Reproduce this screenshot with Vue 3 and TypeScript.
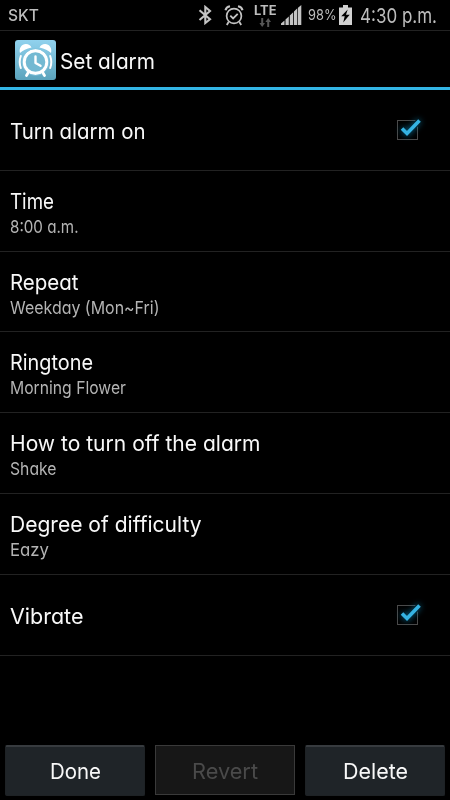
<script setup lang="ts">
import { ref } from 'vue'

interface Setting {
  title: string
  width: number
  summary?: string
  summaryWidth?: number
  toggle?: boolean
}

const settings = ref<Setting[]>([
  { title: 'Turn alarm on', width: 135.5, toggle: true },
  { title: 'Time', width: 44, summary: '8:00 a.m.', summaryWidth: 68.5 },
  { title: 'Repeat', width: 68.5, summary: 'Weekday (Mon~Fri)', summaryWidth: 149.5 },
  { title: 'Ringtone', width: 83, summary: 'Morning Flower', summaryWidth: 116 },
  { title: 'How to turn off the alarm', width: 250.5, summary: 'Shake', summaryWidth: 46.5 },
  { title: 'Degree of difficulty', width: 191.5, summary: 'Eazy', summaryWidth: 39 },
  { title: 'Vibrate', width: 73.5, toggle: true },
])

const actions = [
  { label: 'Done', width: 51, disabled: false },
  { label: 'Revert', width: 66, disabled: true },
  { label: 'Delete', width: 65, disabled: false },
]

// Condenses or widens a label to the given width in pixels.
const vFit = {
  mounted(el: HTMLElement, binding: { value?: number }) {
    const natural = el.getBoundingClientRect().width
    if (!binding.value || !natural) return
    el.style.transform = `scaleX(${binding.value / natural})`
    el.style.marginRight = `${binding.value - natural}px`
  },
}
</script>

<template>
  <main class="screen">
    <header class="status">
      <span v-fit="31" class="label carrier">SKT</span>
      <div class="indicators">
        <svg class="bluetooth" width="15" height="20" viewBox="0 0 15 20" fill="none" stroke="#c4c4c4" stroke-width="2.1">
          <path d="M1.500 5.200 12 14.200 7.300 18V2L12 6 1.500 15" />
        </svg>
        <svg class="clock" width="20" height="21" viewBox="0 0 20 21" fill="none" stroke="#c4c4c4">
          <circle cx="10" cy="11" r="7.4" stroke-width="1.7" />
          <path d="M1.500 5.200Q2.200 2 6 1.300M18.500 5.200Q17.800 2 14 1.300" stroke-width="2.1" />
          <path d="m6.300 10.700 2.800 2.800 4.600-4.600M4.600 17 2.800 20M15.400 17l1.800 3" stroke-width="1.8" />
        </svg>
        <div class="network">
          <span v-fit="22.5" class="label lte">LTE</span>
          <svg width="12" height="9" viewBox="0 0 12 9" fill="#565656">
            <path d="M2.200 0h2v5H6L3.200 9 .4 5h1.800zM8.200 9h2V4H12L9.200 0 6.400 4h1.800z" />
          </svg>
        </div>
        <svg class="signal" width="21" height="20" viewBox="0 0 21 20" fill="#c4c4c4">
          <path d="M0 20v-1.500L3.500 15.500V20zM4.500 20v-5.500l3.300-3V20zM8.800 20V10.500l3.400-3.200V20zM13 20V6.500l3.300-3.200V20zM17 20V2.800L20.300 0v20z" />
        </svg>
        <span v-fit="28.5" class="label percent">98%</span>
        <svg class="battery" width="13" height="20" viewBox="0 0 13 20">
          <path d="M4 0h5v2.500h4V20H0V2.500h4z" fill="#d2d2d2" />
          <path d="M8.700 4.500 2.200 11.300h3.500L4.200 17.500l6.500-7.800H7z" fill="#000" />
        </svg>
        <span v-fit="77" class="label time">4:30 p.m.</span>
      </div>
    </header>

    <div class="titlebar">
      <svg class="app-icon" width="41" height="40" viewBox="0 0 41 40">
        <defs>
          <linearGradient id="sky" x1="0" y1="0" x2="0" y2="1">
            <stop offset="0" stop-color="#91d2ee" />
            <stop offset="1" stop-color="#5ba3bc" />
          </linearGradient>
        </defs>
        <rect width="41" height="40" rx="3" fill="url(#sky)" />
        <g fill="#fff">
          <path d="M5 13C3.500 8 7 3.800 11 4q4 .3 5.500 3.500Q9 9 5 13zM36 13c1.500-5-2-9.200-6-9q-4 .3-5.500 3.500Q32 9 36 13z" />
          <circle cx="20.500" cy="22" r="13" />
        </g>
        <circle cx="20.500" cy="22" r="13.400" fill="none" stroke="#7fc3dd" stroke-width=".8" />
        <circle cx="20.500" cy="22" r="9.800" fill="#73b9d2" />
        <g fill="none" stroke="#fff" stroke-linecap="round">
          <path d="M20.500 16.500v6.500l5 2.800" stroke-width="2.400" stroke-linejoin="round" />
          <path d="M5.800 16Q3.600 22 5.800 28M35.200 16q2.200 6 0 12" stroke-width="2" />
          <path d="m13 33-1.500 2.500M28 33l1.500 2.500" stroke-width="2.800" />
        </g>
      </svg>
      <h1 v-fit="95" class="label heading">Set alarm</h1>
    </div>

    <section class="list">
      <div v-for="item in settings" :key="item.title" class="row" :class="{ single: !item.summary }">
        <div class="text">
          <span v-fit="item.width" class="label title">{{ item.title }}</span>
          <span v-if="item.summary" v-fit="item.summaryWidth" class="label summary">{{ item.summary }}</span>
        </div>
        <svg v-if="item.toggle" class="check" width="40" height="36" viewBox="0 0 40 36" fill="none">
          <rect x="8.500" y="8.500" width="20" height="19" stroke="#4a4a4a" />
          <path d="m13 16.500 5 5L30.500 8.500" stroke="#000" stroke-width="6" />
          <path class="tick" d="m13 16.500 5 5L30.500 8.500" stroke="#35b3e3" stroke-width="3.600" />
        </svg>
      </div>
    </section>

    <footer class="actions">
      <button v-for="action in actions" :key="action.label" class="button" :disabled="action.disabled">
        <span v-fit="action.width" class="label">{{ action.label }}</span>
      </button>
    </footer>
  </main>
</template>

<style>
body {
  background: #000;
}
</style>

<style scoped>
.screen {
  box-sizing: border-box;
  width: 450px;
  height: 800px;
  display: flex;
  flex-direction: column;
  overflow: hidden;
  background: #000;
  color: #f8f8f8;
  font-family: Inter, "Noto Sans", sans-serif;
  font-feature-settings: "cv11";
  font-size: 22px;
}
.label {
  display: inline-block;
  flex: none;
  white-space: nowrap;
  transform-origin: left center;
}
.status {
  box-sizing: border-box;
  height: 31px;
  display: flex;
  align-items: center;
  justify-content: space-between;
  padding: 0 13px 0 8px;
  border-bottom: 1px solid #222;
  color: #bdbdbd;
}
.carrier {
  font-size: 16.5px;
  font-weight: 500;
  line-height: 30px;
}
.indicators {
  display: flex;
  align-items: center;
  height: 30px;
}
.bluetooth {
  margin-right: -1px;
}
.clock {
  margin-left: 12px;
}
.network {
  display: flex;
  flex-direction: column;
  align-items: center;
  margin-left: 10px;
}
.lte {
  font-size: 12.5px;
  font-weight: 700;
  line-height: 14px;
}
.signal {
  margin-left: 4px;
}
.percent {
  margin-left: 6px;
  font-size: 14px;
  line-height: 30px;
}
.battery {
  margin-left: 3px;
}
.time {
  margin-left: 8px;
  font-size: 20.5px;
  line-height: 32px;
  padding-top: 2px;
}
.titlebar {
  box-sizing: border-box;
  height: 59px;
  display: flex;
  align-items: center;
  padding-left: 15px;
  border-bottom: 3px solid #33b5e5;
}
.app-icon {
  margin-top: 2px;
}
.heading {
  margin: 4px 0 0 4px;
  font-size: 22px;
  font-weight: 400;
  line-height: 28px;
}
.list {
  display: flex;
  flex-direction: column;
}
.row {
  box-sizing: border-box;
  height: 80.83px;
  display: flex;
  align-items: center;
  justify-content: space-between;
  padding: 4px 21px 0 10px;
  border-bottom: 1px solid #222;
}
.row.single {
  padding-top: 2px;
}
.check {
  margin-top: -2px;
}
.text {
  display: flex;
  flex-direction: column;
  align-items: flex-start;
}
.title {
  font-size: 22px;
  line-height: 28px;
}
.summary {
  color: #b4b4b4;
  font-size: 17.5px;
  line-height: 24px;
}
.tick {
  filter: drop-shadow(0 0 3px #087ba8);
}
.actions {
  display: grid;
  grid-template-columns: repeat(3, 140px);
  gap: 10px;
  margin: auto 5px 4px;
}
.button {
  box-sizing: border-box;
  height: 51px;
  display: flex;
  align-items: center;
  justify-content: center;
  padding: 0 0 1px;
  border: 1px solid #1e2225;
  border-top: 2px solid #373b3f;
  border-radius: 2px;
  background: #1f2428;
  color: #f8f8f8;
  font: inherit;
  font-feature-settings: inherit;
}
.button:disabled {
  height: 50px;
  padding-bottom: 0;
  padding-top: 1px;
  border: 1px solid #3a3a3a;
  border-radius: 0;
  background: #171717;
  color: #4a4a4a;
}
</style>
